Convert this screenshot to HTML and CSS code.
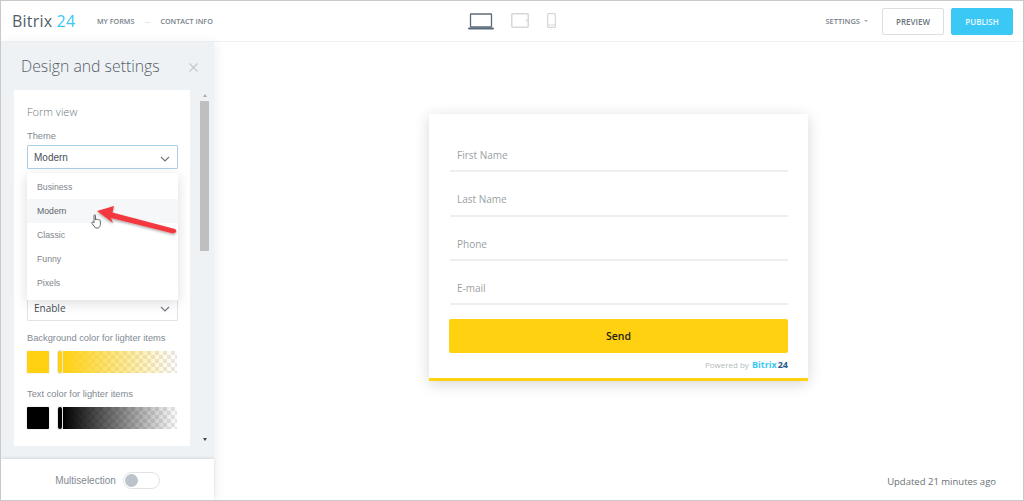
FILE: index.html
```html
<!DOCTYPE html>
<html lang="en">
<head>
<meta charset="utf-8">
<title>Bitrix24 form designer</title>
<link rel="stylesheet" href="styles.css">
</head>
<body>
<div class="frame">
  <header class="topbar">
    <div class="top-left">
      <div class="logo">Bitrix <span class="logo-num">24</span></div>
      <nav class="crumbs"><span>MY FORMS</span><span class="dash">—</span><span>CONTACT INFO</span></nav>
    </div>
    <div class="devices">
      <svg class="laptop" width="26" height="17" viewBox="0 0 26 17"><rect x="2.500" y="1" width="21" height="13" rx="0.5" fill="none" stroke="#5b6b7a" stroke-width="1.3"/><rect x="0" y="14.500" width="26" height="2" rx="1" fill="#5b6b7a"/></svg>
      <svg class="tablet" width="18" height="15" viewBox="0 0 18 15"><rect x="0.750" y="0.750" width="16.500" height="13.500" rx="1" fill="none" stroke="#d4d8dc" stroke-width="1.500"/><rect x="15" y="6.500" width="1.500" height="2" fill="#d4d8dc"/></svg>
      <svg class="phone" width="9" height="15" viewBox="0 0 9 15"><rect x="0.600" y="0.600" width="7.800" height="13.800" rx="1" fill="none" stroke="#d4d8dc" stroke-width="1.200"/><path d="M1 12h7" stroke="#d4d8dc"/></svg>
    </div>
    <div class="top-right">
      <span class="settings">SETTINGS<i class="caret"></i></span>
      <button class="btn btn-preview">PREVIEW</button>
      <button class="btn btn-publish">PUBLISH</button>
    </div>
  </header>
  <div class="content">
    <aside class="sidebar">
      <div class="side-head">
        <h1>Design and settings</h1>
        <svg class="close" width="9" height="9" viewBox="0 0 9 9"><path d="M.5.5l8 8M8.500.5l-8 8" stroke="#c4cacf" stroke-width="1.200"/></svg>
      </div>
      <div class="side-body">
        <section class="panel">
          <h2>Form view</h2>
          <div class="label">Theme</div>
          <div class="select select-active">Modern<svg class="chev" width="10" height="6" viewBox="0 0 10 6"><path d="M1 1l4 4 4-4" fill="none" stroke="#6c757d" stroke-width="1.100"/></svg></div>
          <ul class="dropdown">
            <li>Business</li>
            <li class="hover">Modern</li>
            <li>Classic</li>
            <li>Funny</li>
            <li>Pixels</li>
          </ul>
          <div class="select select-enable">Enable<svg class="chev" width="10" height="6" viewBox="0 0 10 6"><path d="M1 1l4 4 4-4" fill="none" stroke="#6c757d" stroke-width="1.100"/></svg></div>
          <div class="label label-bg">Background color for lighter items</div>
          <div class="color-row">
            <span class="swatch swatch-yellow"></span>
            <span class="handle handle-yellow"></span>
            <span class="ramp ramp-yellow"></span>
          </div>
          <div class="label label-text">Text color for lighter items</div>
          <div class="color-row">
            <span class="swatch swatch-black"></span>
            <span class="handle handle-black"></span>
            <span class="ramp ramp-black"></span>
          </div>
        </section>
        <div class="scroll">
          <i class="arrow-up"></i>
          <div class="thumb"></div>
          <i class="arrow-down"></i>
        </div>
      </div>
      <div class="side-foot">
        <span>Multiselection</span>
        <span class="toggle"><i></i></span>
      </div>
    </aside>
    <main class="stage">
      <form class="card">
        <div class="field">First Name</div>
        <div class="field">Last Name</div>
        <div class="field">Phone</div>
        <div class="field">E-mail</div>
        <div class="send">Send</div>
        <div class="powered">Powered by <b class="pb-blue">Bitrix</b><b class="pb-dark">24</b></div>
      </form>
      <div class="updated">Updated 21 minutes ago</div>
    </main>
  </div>
  <svg class="annot" width="100" height="50" viewBox="0 0 100 50">
    <defs><filter id="sh" x="-20%" y="-20%" width="140%" height="160%"><feDropShadow dx="0" dy="1.500" stdDeviation="1.200" flood-color="#000" flood-opacity=".3"/></filter></defs>
    <path filter="url(#sh)" d="M5 7 L22 2 L20.500 8.500 L83 25 Q85.500 27 83.500 28.500 L81 29.500 L19 14 L21 19 Z" fill="#f4393f"/>
  </svg>
  <svg class="hand" width="11" height="15" viewBox="0 0 11 15"><path d="M3 1.500c0-1 1.500-1 1.500 0V6l.5-.5c.6-.5 1.200-.2 1.400.2.500-.4 1.200-.2 1.400.3.600-.3 1.500 0 1.500.9v3.600c0 1.500-.8 3-2 3.500H4.500L1 9.500c-.7-1 .5-2 1.300-1.200L3 9z" fill="#fff" stroke="#555" stroke-width=".9"/></svg>
</div>
</body>
</html>
```
FILE: styles.css
```css
* { box-sizing: border-box; }
html, body { margin: 0; padding: 0; background: #fff; }
body { width: 1024px; height: 501px; overflow: hidden; font-family: "Open Sans", sans-serif; }
.frame { position: relative; width: 1024px; height: 501px; border: 1px solid #c9c9c9; display: flex; flex-direction: column; background: #fff; overflow: hidden; }

.topbar { height: 41px; flex: none; display: grid; grid-template-columns: 1fr auto 1fr; align-items: center; border-bottom: 1px solid #f0f2f3; background: #fff; padding: 0 10px 0 11px; }
.top-left { display: flex; align-items: center; }
.logo { font-size: 16px; color: #535c69; letter-spacing: .2px; line-height: 40px; width: 85px; }
.logo-num { color: #3bc8f5; }
.crumbs { display: flex; gap: 10px; font-size: 7.200px; font-weight: 600; color: #767f88; }
.dash { color: #d5d8db; font-weight: 400; width: 6px; overflow: hidden; }
.devices { display: flex; align-items: flex-start; margin-left: -1px; }
.laptop { margin-right: 17px; }
.tablet { margin-right: 18px; }
.top-right { display: flex; align-items: center; justify-content: flex-end; }
.settings { font-size: 7.500px; font-weight: 600; color: #767f88; display: flex; align-items: center; margin-right: 14px; }
.caret { width: 0; height: 0; border: 2px solid transparent; border-top: 2.500px solid #a3a9af; border-bottom: 0; margin-left: 4px; }
.btn { width: 62px; height: 27px; font-family: "Open Sans", sans-serif; font-size: 8px; font-weight: 600; border-radius: 2px; padding: 0; }
.btn-preview { background: #fff; border: 1px solid #dbdfe2; color: #6b747c; margin-right: 7px; }
.btn-publish { background: #3bc8f5; border: 1px solid #3bc8f5; color: #eaf9fe; }

.content { flex: 1; display: flex; min-height: 0; }
.sidebar { width: 213px; flex: none; display: flex; flex-direction: column; background: #eef2f4; box-shadow: 3px 0 10px rgba(0,0,0,.06); position: relative; }
.side-head { height: 48px; flex: none; display: flex; align-items: center; justify-content: space-between; padding: 0 16px 0 20px; }
.side-head h1 { margin: 0; font-size: 15.800px; font-weight: 300; color: #56606a; }
.close { margin-top: 2px; }
.side-body { flex: 1; display: flex; min-height: 0; padding-left: 13px; }
.panel { position: relative; width: 176px; height: 356px; background: #fff; padding: 14px 13px 0; }
.panel h2 { margin: 0; font-size: 11px; font-weight: 300; line-height: 16px; color: #6f777e; }
.label { font-family: "Liberation Sans", sans-serif; font-size: 9.300px; color: #828a92; line-height: 13px; }
.panel h2 + .label { margin-top: 10px; }
.select { position: relative; height: 24px; width: 151px; margin-top: 2px; border: 1px solid #e0e4e7; border-radius: 1px; padding-left: 6px; display: flex; align-items: center; font-family: "Liberation Sans", sans-serif; font-size: 10px; color: #48505a; background: #fff; }
.select-active { border-color: #a9cfe8; }
.select-enable { margin-top: 126px; height: 26px; font-family: "Open Sans", sans-serif; font-size: 10px; }
.chev { position: absolute; right: 7px; top: 10px; }
.dropdown { position: absolute; left: 13px; top: 83px; width: 151px; height: 127px; margin: 0; padding: 2px 0; list-style: none; background: #fff; box-shadow: 0 3px 12px rgba(0,0,0,.14); z-index: 2; font-family: "Liberation Sans", sans-serif; font-size: 8.700px; color: #7d858c; }
.dropdown li { height: 24px; line-height: 24px; padding-left: 10px; }
.dropdown .hover { background: #f5f7f8; color: #5d656d; }
.label-bg { margin-top: 11px; }
.label-text { margin-top: 15px; }
.color-row { display: flex; align-items: stretch; height: 22px; margin-top: 6px; }
.swatch { width: 22px; border-radius: 1px; box-shadow: 0 0 0 1px #f1f3f4; }
.swatch-yellow { background: #ffd110; }
.swatch-black { background: #000; }
.handle { width: 4px; margin: 0 1px 0 9px; border-radius: 2px; box-shadow: 0 0 0 1px #e3e6e8; }
.handle-yellow { background: #ffd110; }
.handle-black { background: #000; }
.ramp { flex: 1; background-size: 100% 100%, 8px 8px; }
.ramp-yellow { background-image: linear-gradient(90deg, #ffd110, rgba(255,209,16,0)), conic-gradient(#e6e6e6 25%, #fff 0 50%, #e6e6e6 0 75%, #fff 0); }
.ramp-black { background-image: linear-gradient(90deg, #000, rgba(0,0,0,0)), conic-gradient(#e6e6e6 25%, #fff 0 50%, #e6e6e6 0 75%, #fff 0); }
.scroll { width: 9px; margin-left: 10px; display: flex; flex-direction: column; align-items: center; height: 356px; padding-top: 4px; }
.arrow-up, .arrow-down { width: 0; height: 0; border: 2.500px solid transparent; }
.arrow-up { border-bottom: 3px solid #a9aeb2; border-top: 0; }
.thumb { width: 9px; height: 150px; margin-top: 4px; background: #bfbfbf; }
.arrow-down { margin-top: auto; margin-bottom: 5px; border-top: 3px solid #3e4448; border-bottom: 0; }
.side-foot { height: 41px; flex: none; margin-top: 13px; padding-top: 1px; background: #fff; box-shadow: 0 -1px 3px rgba(0,0,0,.1); display: flex; align-items: center; justify-content: center; gap: 7px; font-family: "Liberation Sans", sans-serif; font-size: 10px; color: #828a92; }
.toggle { width: 37px; height: 17px; border: 1px solid #dfe3e6; border-radius: 9px; padding: 1px; background: #fff; display: flex; }
.toggle i { width: 13px; height: 13px; border-radius: 50%; background: #bcc3ca; }

.stage { flex: 1; display: flex; flex-direction: column; align-items: center; padding-top: 72px; min-width: 0; }
.card { width: 379px; height: 267px; flex: none; background: #fff; border-bottom: 3px solid #ffd110; box-shadow: 0 3px 14px rgba(0,0,0,.16); padding: 14px 20px 0 20px; }
.field { height: 44.300px; padding: 13px 0 0 7px; font-size: 10px; line-height: 28px; color: #9a9fa4; border-bottom: 2px solid #eceef0; margin-left: 1px; }
.send { height: 34px; margin-top: 14px; background: #ffd110; border-radius: 2px; display: flex; align-items: center; justify-content: center; font-size: 10.500px; font-weight: 600; color: #1c1c1c; }
.powered { margin-top: 5px; text-align: right; font-size: 8px; line-height: 14px; color: #b4b9bd; }
.pb-blue, .pb-dark { font-size: 9px; font-weight: 700; }
.pb-blue { color: #3bc8f5; margin-left: 1px; }
.pb-dark { color: #2c5a86; margin-left: 1px; }
.updated { margin-top: auto; margin-bottom: 11px; align-self: flex-end; margin-right: 27px; font-size: 9.500px; color: #6a7076; line-height: 14px; }

.annot { position: absolute; left: 91px; top: 203px; z-index: 5; }
.hand { position: absolute; left: 90px; top: 213px; z-index: 6; }
```
